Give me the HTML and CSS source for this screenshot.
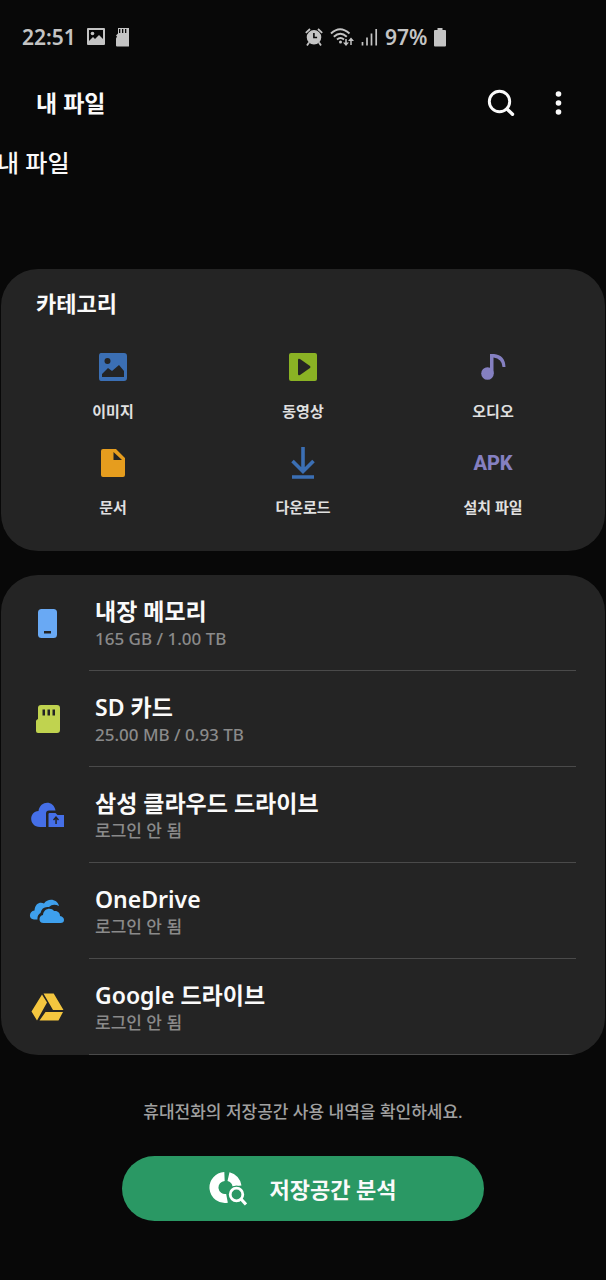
FILE: index.html
```html
<!DOCTYPE html>
<html lang="ko">
<head>
<meta charset="utf-8">
<meta name="viewport" content="width=device-width, initial-scale=1">
<title>내 파일</title>
<link rel="stylesheet" href="styles.css">
</head>
<body>
<div class="status">
  <div class="status-group">
    <span>22:51</span>
    <svg class="status-picture" width="18" height="18" viewBox="0 0 18 18"><path fill="currentColor" fill-rule="evenodd" d="M1 0h16q1 0 1 1v15q0 1-1 1H1q-1 0-1-1V1q0-1 1-1zM2 2v11l4-4 2 2 4-4 4 4V2z"/><circle cx="5.500" cy="5.500" r="1.800" fill="currentColor"/></svg>
    <svg width="14" height="19" viewBox="0 0 14 19"><path fill="currentColor" fill-rule="evenodd" d="M2 0h11v18q0 .5-.5.500H1q-1 0-1-1v-7l1-2-1-1 2-2zM3 1v4h1.300V1zm3 0v4h1.300V1zm3 0v4h1.300V1z"/></svg>
  </div>
  <div class="status-group status-right">
    <svg width="18" height="18" viewBox="0 0 18 18"><g fill="none" stroke="currentColor" stroke-width="1.800"><path d="M.8 4.800 5 1M17.200 4.800 13 1M4 14.500 2 17.500M14 14.500l2 3"/></g><path fill="currentColor" fill-rule="evenodd" d="M9 2a7.300 7.300 0 1 0 0 14.600A7.300 7.300 0 1 0 9 2zm-.9 3v5.200h4V8.700H9.700V5z"/></svg>
    <svg width="24" height="19" viewBox="0 0 24 19"><g fill="none" stroke="currentColor" stroke-width="1.900"><path d="M1 5.500Q10-3 19.500 5.500M3.800 8.800q6.500-6 13 0M7 11.500q3.500-3 7 0"/><path stroke-width="1.500" d="M16 11v6M21 11v6"/></g><path fill="currentColor" d="m13 14.500 3 3.500 3-3.500zM18 13l3-3.500 3 3.500z"/><circle cx="10.500" cy="14" r="1.500" fill="currentColor"/></svg>
    <svg width="17" height="18" viewBox="0 0 17 18"><path stroke="currentColor" stroke-width="1.700" d="M1.500 14v3.500M6 9.500v8M10.500 5.500v12M15.200 1v16.500"/></svg>
    <span>97%</span>
    <svg width="12" height="19" viewBox="0 0 12 19"><path fill="currentColor" d="M3.500 0h5v2H11q1 0 1 1v14.500q0 1-1 1H1q-1 0-1-1V3q0-1 1-1h2.500z"/></svg>
  </div>
</div>

<header class="toolbar">
  <h1 class="toolbar-title">내 파일</h1>
  <button class="icon-button" type="button" aria-label="검색"><svg width="28" height="28" viewBox="0 0 28 28" fill="none" stroke="currentColor"><circle cx="12.500" cy="12.500" r="10.200" stroke-width="2.900"/><path stroke-width="3.400" stroke-linecap="round" d="m20 20 5.500 5.300"/></svg></button>
  <button class="icon-button" type="button" aria-label="옵션 더보기"><svg width="28" height="28" viewBox="0 0 28 28" fill="currentColor"><circle cx="13.500" cy="5" r="2.800"/><circle cx="13.500" cy="14" r="2.800"/><circle cx="13.500" cy="23" r="2.800"/></svg></button>
</header>
<p class="path">내 파일</p>

<main class="content">
  <section class="card categories">
    <h2 class="card-title">카테고리</h2>
    <div class="category-grid">
      <a class="category" href="#images"><svg width="32" height="32" viewBox="0 0 32 32"><path fill="#3b6fb4" fill-rule="evenodd" d="M4 2h23q3 0 3 3v22q0 3-3 3H4q-2 0-2-3V5q0-3 2-3zm1 21v3h22v-6l-5-6-7 6-4-3z"/><circle cx="10.500" cy="10" r="3" fill="#242424"/></svg><span>이미지</span></a>
      <a class="category" href="#videos"><svg width="32" height="32" viewBox="0 0 32 32"><rect x="2" y="2" width="28" height="28" rx="2" fill="#8ab224"/><path fill="#242424" d="M11 9q0-2 2-1l10 7q1 1 0 2l-10 7q-2 1-2-1z"/></svg><span>동영상</span></a>
      <a class="category" href="#audio"><svg width="32" height="32" viewBox="0 0 32 32"><circle cx="10.500" cy="22.500" r="6.300" fill="#8580c1"/><path fill="#8580c1" d="M13 3h4q11 1 11.500 13h-3Q25 7.500 16.500 6.500v16H13z"/></svg><span>오디오</span></a>
      <a class="category" href="#documents"><svg width="32" height="32" viewBox="0 0 32 32"><path fill="#e69d1e" fill-rule="evenodd" d="M6 2h13l9 9v17q0 2-2 2H6q-2 0-2-2V4q0-2 2-2zm10.500 3v8H25z"/></svg><span>문서</span></a>
      <a class="category" href="#downloads"><svg width="32" height="32" viewBox="0 0 32 32" fill="none" stroke="#3b6fb4" stroke-width="3.600"><path d="M16 0v24M5.500 14 16 24.500 26.500 14M5 30h22"/></svg><span>다운로드</span></a>
      <a class="category" href="#apk"><span class="apk" aria-hidden="true">APK</span><span>설치 파일</span></a>
    </div>
  </section>

  <nav class="card storage">
    <a class="row" href="#internal">
      <svg class="row-icon" width="36" height="32" viewBox="0 0 36 32"><rect x="9" y="2" width="19" height="29" rx="3.500" fill="#69a9f4"/><rect x="15" y="24" width="7" height="2.500" fill="#242424"/></svg>
      <span class="row-text"><span class="row-title">내장 메모리</span><span class="row-sub">165 GB / 1.00 TB</span></span>
    </a>
    <a class="row" href="#sd">
      <svg class="row-icon" width="36" height="32" viewBox="0 0 36 32"><path fill="#c0d34f" d="M12 2h16q3 0 3 3v22q0 3-3 3H9q-2 0-2-2V18q0-1 2-2V5q0-3 3-3z"/><path fill="#242424" d="M13.500 6.500h2.500v6h-2.500zM18.500 6.500H21v6h-2.500zM23.500 6.500H26v6h-2.500z"/></svg>
      <span class="row-text"><span class="row-title">SD 카드</span><span class="row-sub">25.00 MB / 0.93 TB</span></span>
    </a>
    <a class="row" href="#samsung">
      <svg class="row-icon" width="36" height="32" viewBox="0 0 36 32" fill="#456fe7"><path d="M17 28h-6C-1 28 0 12 9.500 12 11 1 25 1 26.500 11.500H20q-3 0-3 3z"/><path fill-rule="evenodd" d="M20.500 14h6l2 2H35v12H19.500V15q0-1 1-1zm6.500 3-3 3.500 1 1 1.300-1.200V25h1.500v-4.700l1.200 1.200 1-1z"/></svg>
      <span class="row-text"><span class="row-title">삼성 클라우드 드라이브</span><span class="row-sub">로그인 안 됨</span></span>
    </a>
    <a class="row" href="#onedrive">
      <svg class="row-icon" width="36" height="32" viewBox="0 0 36 32" fill="#3ea0ed"><path d="M8.500 24.500H5C-1 24.500 0 16 5.500 15.500 6 8 11.500 6.500 15 8.500 19 2.500 28.500 4 30 11q-6-3-10 1-7-1-8.500 6-3.500 2-3 6.500z"/><path d="M14.500 28C9 28 9.500 20.500 14 20c.5-7 8.500-8 11-4 4-.5 6 2 6 5 5 .5 5.500 7 .5 7z"/></svg>
      <span class="row-text"><span class="row-title">OneDrive</span><span class="row-sub">로그인 안 됨</span></span>
    </a>
    <a class="row" href="#google">
      <svg class="row-icon" width="36" height="32" viewBox="0 0 36 32" fill="#f4c63f"><path d="m13 3.500 5 8L8 29.500l-5.500-9zM14.500 2.500h10.200L34.500 19H24zM16.500 21H34l-4.500 8.500H10.500z"/></svg>
      <span class="row-text"><span class="row-title">Google 드라이브</span><span class="row-sub">로그인 안 됨</span></span>
    </a>
  </nav>

  <p class="hint">휴대전화의 저장공간 사용 내역을 확인하세요.</p>
  <button class="analyze" type="button">
    <svg width="38" height="36" viewBox="0 0 38 36"><path fill="none" stroke="#fff" stroke-width="9" d="M15.500 5.600A11 11 0 1 0 18 27.400M19.500 5.600A11 11 0 0 1 28 15"/><circle cx="27.500" cy="23.500" r="9" fill="#2a9864"/><circle cx="27.500" cy="23.500" r="6.300" fill="none" stroke="#fff" stroke-width="2.800"/><path stroke="#fff" stroke-width="3.200" d="m32 28 5 5.500"/></svg>
    <span>저장공간 분석</span>
  </button>
</main>
</body>
</html>
```
FILE: styles.css
```css
* { box-sizing: border-box; }

body {
  margin: 0;
  background: #080808;
  color: #fafafa;
  font-family: "Noto Sans", "Noto Sans CJK KR", sans-serif;
  font-weight: 500;
}

h1, h2, p { margin: 0; }
a { color: inherit; text-decoration: none; }
svg { display: block; flex: none; }

button {
  border: 0;
  padding: 0;
  font: inherit;
  color: inherit;
  cursor: pointer;
}

.status {
  display: grid;
  grid-template-columns: 1fr 1fr;
  height: 74px;
  padding-left: 22px;
  color: #c4c4c4;
  font-size: 21px;
  font-weight: 600;
  line-height: 30px;
}

.status-group {
  display: flex;
  align-items: center;
  gap: 11px;
}

.status-right {
  gap: 7px;
  margin-left: -9px;
}

.toolbar {
  display: flex;
  align-items: center;
  height: 58px;
  padding: 0 33px 0 36px;
  gap: 30px;
}

.toolbar-title {
  flex: 1;
  font-size: 23px;
  line-height: 36px;
  font-weight: 700;
}

.icon-button { background: none; }

.path {
  margin: 13px 0 88px -3px;
  font-size: 24px;
  line-height: 36px;
}

.content {
  display: flex;
  flex-direction: column;
  padding: 0 1px 59px;
}

.card {
  background: #242424;
  border-radius: 37px;
  overflow: hidden;
}

.categories { padding: 18px 17px 24px; }

.card-title {
  padding-left: 18px;
  font-size: 22px;
  line-height: 32px;
  font-weight: 700;
}

.category-grid {
  display: grid;
  grid-template-columns: repeat(3, 1fr);
  grid-auto-rows: 96px;
  padding-top: 16px;
}

.category {
  display: flex;
  flex-direction: column;
  align-items: center;
  gap: 16px;
  padding-top: 16px;
  color: #e0e0e0;
  font-size: 15px;
  font-weight: 600;
  line-height: 24px;
}

.apk {
  color: #8580c1;
  font-family: Roboto, sans-serif;
  font-size: 20px;
  line-height: 32px;
  font-weight: 800;
}

.storage { margin-top: 24px; }

.row {
  display: flex;
  align-items: center;
  height: 96px;
  padding: 0 29px 0 28px;
  gap: 24px;
}

.row-text {
  flex: 1;
  display: flex;
  flex-direction: column;
  height: 96px;
  padding: 20px 0 0 6px;
  border-bottom: 1px solid #4a4a4a;
}

.row-title {
  font-size: 23px;
  font-weight: 600;
  line-height: 32px;
}

.row-sub {
  color: #8a8a8a;
  font-size: 17px;
  line-height: 24px;
}

.hint {
  margin-top: 44px;
  color: #a0a0a0;
  font-size: 17px;
  line-height: 26px;
  text-align: center;
}

.analyze {
  display: flex;
  align-items: center;
  justify-content: center;
  align-self: center;
  gap: 22px;
  width: 60%;
  height: 65px;
  margin-top: 31px;
  border-radius: 33px;
  background: #2a9864;
  font-size: 22px;
  font-weight: 600;
  line-height: 32px;
}
```
